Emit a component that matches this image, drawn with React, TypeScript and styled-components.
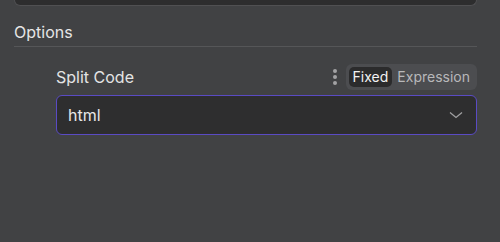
import React, { useState } from "react";
import styled, { createGlobalStyle } from "styled-components";

const GlobalStyle = createGlobalStyle`
  html, body {
    margin: 0;
    padding: 0;
    background: #414244;
    font-family: Inter, "Noto Sans", sans-serif;
    color: #e4e4e4;
  }
`;

const Page = styled.div`
  width: 500px;
  height: 242px;
  padding: 0 23px 0 14px;
  box-sizing: border-box;
  overflow: hidden;
`;

const TopBox = styled.div`
  height: 5px;
  background: #2d2d2e;
  border: 1px solid #505052;
  border-top: none;
  border-radius: 0 0 6px 6px;
`;

const SectionTitle = styled.div`
  margin-top: 16px;
  font-size: 16px;
  line-height: 20px;
  color: #e6e6e6;
  padding-bottom: 4px;
  border-bottom: 1px solid #555658;
`;

const Field = styled.div`
  margin: 17px 0 0 42px;
  display: flex;
  flex-direction: column;
  gap: 5px;
`;

const LabelRow = styled.div`
  display: flex;
  align-items: center;
  height: 26px;
`;

const Label = styled.label`
  flex: 1;
  font-size: 16px;
  color: #e4e4e4;
`;

const Dots = styled.div`
  display: flex;
  flex-direction: column;
  gap: 2px;
  margin-right: 9px;
  span {
    width: 4px;
    height: 4px;
    border-radius: 50%;
    background: #a2a2a4;
  }
`;

const Toggle = styled.div`
  display: flex;
  align-items: center;
  padding: 3px;
  gap: 1px;
  background: #4c4d50;
  border-radius: 6px;
`;

const ToggleOption = styled.button<{ $active?: boolean }>`
  border: none;
  font-family: Inter, "Noto Sans", sans-serif;
  font-size: 14px;
  line-height: 20px;
  padding: 0 4px;
  border-radius: 5px;
  cursor: pointer;
  background: ${(p) => (p.$active ? "#2b2b2c" : "transparent")};
  color: ${(p) => (p.$active ? "#f2f2f2" : "#b8b8ba")};
`;

const Select = styled.div`
  height: 40px;
  box-sizing: border-box;
  display: flex;
  align-items: center;
  justify-content: space-between;
  padding: 0 12px 0 11px;
  background: #2e2e2f;
  border: 1px solid #5a4bc4;
  border-radius: 6px;
  font-size: 16px;
  color: #e8e8e8;
`;

const App: React.FC = () => {
  const [mode, setMode] = useState("fixed");

  return (
    <Page>
      <GlobalStyle />
      <TopBox />
      <SectionTitle>Options</SectionTitle>
      <Field>
        <LabelRow>
          <Label>Split Code</Label>
          <Dots>
            <span />
            <span />
            <span />
          </Dots>
          <Toggle>
            <ToggleOption $active={mode === "fixed"} onClick={() => setMode("fixed")}>
              Fixed
            </ToggleOption>
            <ToggleOption $active={mode === "expression"} onClick={() => setMode("expression")}>
              Expression
            </ToggleOption>
          </Toggle>
        </LabelRow>
        <Select>
          <span>html</span>
          <svg width="16" height="16" viewBox="0 0 16 16" fill="none">
            <path d="M2 5.5l6 5 6-5" stroke="#a0a0a2" strokeWidth="1.3" />
          </svg>
        </Select>
      </Field>
    </Page>
  );
};

export default App;
